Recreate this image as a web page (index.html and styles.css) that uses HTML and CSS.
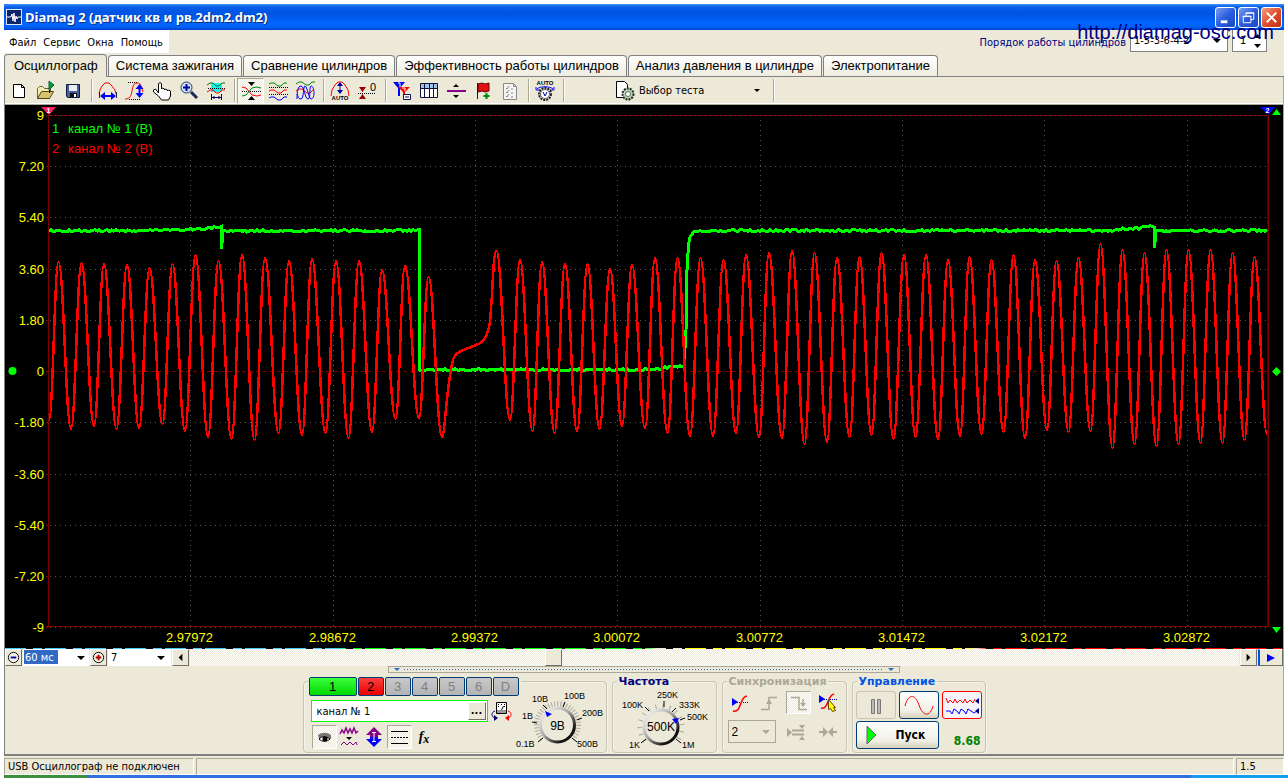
FILE: index.html
```html
<!DOCTYPE html>
<html lang="ru">
<head>
<meta charset="utf-8">
<title>Diamag 2</title>
<link rel="stylesheet" href="styles.css">
</head>
<body>
<div class="window">
  <header class="titlebar">
    <svg class="app-icon" viewBox="0 0 16 16"><rect width="16" height="16" fill="#dfe8ff"/><rect x="1" y="1" width="14" height="14" fill="#0a246a"/><path d="M1 8h4l1-3 1 7 1-8 1 9 1-6 1 3 1-2h3" fill="none" stroke="#fff"/></svg>
    <h1 class="title">Diamag 2 (датчик кв и рв.2dm2.dm2)</h1>
    <button class="win-btn" aria-label="Свернуть"><svg viewBox="0 0 20 20"><path d="M5 14.500h7" stroke="#fff" stroke-width="3"/></svg></button>
    <button class="win-btn" aria-label="Восстановить"><svg viewBox="0 0 20 20"><path d="M7.500 8V5h8v7h-3M7 5.500h9M4.500 8.500h8v7h-8zM4 9h9" fill="none" stroke="#fff"/></svg></button>
    <button class="win-btn close" aria-label="Закрыть"><svg viewBox="0 0 20 20"><path d="M5 5l10 10M15 5L5 15" stroke="#fff" stroke-width="2"/></svg></button>
  </header>
  <a class="watermark" href="#">http://diamag-osc.com</a>

  <div class="menu-row">
    <nav class="menu"><a href="#">Файл</a><a href="#">Сервис</a><a href="#">Окна</a><a href="#">Помощь</a></nav>
    <div class="order">
      <label for="order">Порядок работы цилиндров</label>
      <span class="combo order-combo"><select id="order"><option>1-5-3-6-4-2</option></select></span>
      <span class="spin"><input id="cyl" aria-label="Цилиндр" value="1"><svg viewBox="0 0 9 14"><path d="M1 4h7L4.500 0zM1 10h7l-3.500 4z"/></svg></span>
    </div>
  </div>

  <div class="tabs" role="tablist">
    <button role="tab" class="tab active" aria-selected="true">Осциллограф</button>
    <button role="tab" class="tab">Система зажигания</button>
    <button role="tab" class="tab">Сравнение цилиндров</button>
    <button role="tab" class="tab">Эффективность работы цилиндров</button>
    <button role="tab" class="tab">Анализ давления в цилиндре</button>
    <button role="tab" class="tab">Электропитание</button>
  </div>

  <main class="page">
    <div class="toolbar">
      <button class="tool" aria-label="Новый"><svg viewBox="0 0 24 24"><path d="M6.500 5.500h8l3 3v10h-11zM14.500 5.500v3h3" fill="#fff" stroke="#000"/></svg></button>
      <button class="tool" aria-label="Открыть"><svg viewBox="0 0 24 24"><path d="M3.500 19.500v-10l2-2h3l2 2h6v4" fill="#f5ecb0" stroke="#6b6334"/><path d="M3.500 19.500l4-7h12l-4 7z" fill="#d8c46c" stroke="#4b431c"/><path d="M15 2l5 4-5 5z" fill="#0a9a2a" stroke="#064"/><path d="M15.500 11v3" stroke="#000"/></svg></button>
      <button class="tool" aria-label="Сохранить"><svg viewBox="0 0 24 24"><path d="M5.500 5.500h13v13h-12l-1-1z" fill="#4a5c9a" stroke="#111a40"/><path d="M8 6h8v6H8z" fill="#e8eef4"/><path d="M9 14h7v4H9z" fill="#111"/><path d="M13 15h2v3h-2z" fill="#fff"/></svg></button>
      <i class="sep"></i>
      <button class="tool" aria-label="Период"><svg viewBox="0 0 24 24"><path d="M3 15l1-4 2-4 3-3h4l3 3 3 4 1 4" fill="none" stroke="red"/><path d="M3.500 13v6M20.500 13v6" stroke="#223"/><path d="M6 17h12" stroke="#00f" stroke-width="2"/><path d="M4 17l5-4v8zM20 17l-5-4v8z" fill="#00f"/></svg></button>
      <button class="tool" aria-label="Амплитуда"><svg viewBox="0 0 24 24"><path d="M5 3.500h9M6 20.500h12" stroke="#000" stroke-dasharray="1 1"/><path d="M2 20c5 0 6-3 7-8 1-6 2-8 5-8 4 0 4 3 6 9" fill="none" stroke="red"/><path d="M16.500 7v10" stroke="#00f" stroke-width="2"/><path d="M16.500 5l-4 5h8zM16.500 19l-4-5h8z" fill="#00f"/></svg></button>
      <button class="tool" aria-label="Рука"><svg viewBox="0 0 24 24"><path d="M8.500 14V4.500l1.500-1 1.500 1V10l1-1 2 1v1l1-1 2 1v1l1-1 2 1v5l-2 4h-7l-3-4-5-4v-2l2-1z" fill="#fff" stroke="#000"/></svg></button>
      <button class="tool" aria-label="Лупа"><svg viewBox="0 0 24 24"><path d="M14 13l6 6" stroke="#1b2a52" stroke-width="3"/><circle cx="9.500" cy="8.500" r="5.500" fill="#c8e4f4" stroke="#335"/><path d="M6 8.500h7M9.500 5v7" stroke="#00a" stroke-width="2"/></svg></button>
      <button class="tool" aria-label="Участок"><svg viewBox="0 0 24 24"><path d="M7 4h11v9H7z" fill="#18f0f4"/><path d="M3 6l3-2h3l3 3h3l3-3h3" fill="none" stroke="#070"/><path d="M4 9.500h17" stroke="#000" stroke-dasharray="1 1"/><path d="M3 13l3-2h3l3 3h3l3-3h3" fill="none" stroke="red"/><path d="M8 18.500h9M7.500 15v6M17.500 15v6M10 17v3M15 17v3" stroke="#006"/></svg></button>
      <i class="sep"></i>
      <button class="tool pressed" aria-label="Совместить"><svg viewBox="0 0 24 24"><path d="M9 3h7l-3.500 4zM9 21h7l-3.500-4z"/><path d="M3 12.500h19" stroke="#000" stroke-dasharray="1 1"/><path d="M3 8l4 1 6 7 5 1 4-1" fill="none" stroke="red"/><path d="M3 17l4-1 6-7 5-1 4 1" fill="none" stroke="#080"/></svg></button>
      <button class="tool" aria-label="Разнести"><svg viewBox="0 0 24 24"><path d="M3 5l2-1h3l4 3h3l3-3h3" fill="none" stroke="#080"/><path d="M3 12l2-1h3l4 3h3l3-3h3" fill="none" stroke="red"/><path d="M3 19l2-1h3l4 3h3l3-3h3" fill="none" stroke="#00f"/><path d="M3 8.500h19M3 15.500h19" stroke="#000" stroke-dasharray="1 1"/></svg></button>
      <button class="tool" aria-label="Наложить"><svg viewBox="0 0 24 24"><path d="M3 5l3-2h3l4 3h3l3-3h3" fill="none" stroke="#080"/><path d="M3 12l3-2h3l5 4h3l4-4" fill="none" stroke="red"/><path d="M4 20c0-8 1-13 4-13s4 13 7 13 1-13 3-13 3 4 3 7-1 6-3 6-4-13-6-13-1 13-4 13-3-3-4-5" fill="none" stroke="#00f"/></svg></button>
      <i class="sep"></i>
      <button class="tool" aria-label="Авто амплитуда"><svg viewBox="0 0 24 24"><path d="M3 17l1-6 3-5 3-3h4l3 3 3 5 1 6" fill="none" stroke="red"/><path d="M12 5v9" stroke="#00a"/><path d="M12 3l-3 4h6zM12 15l-3-4h6z" fill="#00a"/><text x="12" y="21" class="auto">AUTO</text></svg></button>
      <button class="tool" aria-label="Ноль"><svg viewBox="0 0 24 24"><path d="M4 8h7l-3.500 5zM4 20h7l-3.500-5z" fill="#900"/><path d="M3 14.500h18" stroke="#000" stroke-dasharray="1 1"/><text x="15" y="12" class="zero">0</text></svg></button>
      <i class="sep"></i>
      <button class="tool" aria-label="Маркеры"><svg viewBox="0 0 24 24"><path d="M3 3h12L10 9v8H8V9z" fill="#00f"/><path d="M8 8h12l-5 5v6h-2v-6z" fill="red"/><path d="M8 4h2v4" fill="none" stroke="#fff"/><path d="M12 9h3v3" fill="none" stroke="#fff"/><path d="M13.500 15.500h7v5h-7z" fill="#fff" stroke="#115"/><path d="M15 18h4" stroke="#115"/></svg></button>
      <button class="tool" aria-label="Таблица"><svg viewBox="0 0 24 24"><path d="M3.500 4.500h17v14h-17z" fill="#fff" stroke="#113"/><path d="M4 5h16v4H4z" fill="#9cc4ec"/><path d="M3 9.500h18M7.500 5v13M12.500 5v13M16.500 5v13" stroke="#113"/></svg></button>
      <button class="tool" aria-label="Линия"><svg viewBox="0 0 24 24"><path d="M3 12h19" stroke="#808" stroke-width="2"/><path d="M9 8h6l-3-3zM9 16h6l-3 3z"/></svg></button>
      <button class="tool" aria-label="Флаг"><svg viewBox="0 0 24 24"><path d="M6.500 4v16" stroke="#400"/><path d="M7 5l4-1 3 1 4-1v8l-4 1-3-1-4 1z" fill="#e01010" stroke="#600"/><path d="M15.500 14v6M12.500 17h6" stroke="#080" stroke-width="2"/></svg></button>
      <button class="tool" aria-label="Отчёт"><svg viewBox="0 0 24 24"><path d="M5.500 4.500h10l3 3v13h-13zM15.500 4.500v3h3" fill="#f4f4f0" stroke="#888"/><path d="M8 9l1 1 2-3M8 13l1 1 2-3M8 17l1 1 2-3M13 10h2M13 14h2M13 18h2" fill="none" stroke="#888"/></svg></button>
      <i class="sep"></i>
      <button class="tool" aria-label="Авто вольт"><svg viewBox="0 0 24 24"><text x="12" y="6" class="auto">AUTO</text><path d="M4 10c3-3 13-3 16 0M3 8v3h4M21 8v3h-4" fill="none" stroke="#00f"/><circle cx="12" cy="15" r="6" fill="#ddd" stroke="#222" stroke-width="2" stroke-dasharray="2 1"/><circle cx="12" cy="15" r="4.500" fill="#fff" stroke="#666"/><path d="M10 13l2 4 2-4" fill="none" stroke="#00a"/></svg></button>
      <i class="sep"></i>
      <button class="test-select"><svg viewBox="0 0 24 24"><path d="M4.500 2.500h8l3 3v13h-11z" fill="#fff" stroke="#000"/><circle cx="16" cy="15" r="5.500" fill="#b9d0b9" stroke="#1d2d1d" stroke-width="2" stroke-dasharray="2 1"/><circle cx="16" cy="15" r="2.500" fill="#fff" stroke="#5b755b"/></svg><span>Выбор теста</span><i class="caret"></i></button>
      <i class="sep"></i>
    </div>

    <svg class="plot" id="plot" viewBox="5 105 1278 543" role="img" aria-label="Осциллограмма"></svg>
    <div class="strip"></div>

    <div class="scroll-row">
      <button class="mini" aria-label="Уменьшить"><svg viewBox="0 0 16 16"><circle cx="8" cy="8" r="5.500" fill="#f4f0e4" stroke="#000"/><path d="M5 8h6" stroke="#00a" stroke-width="2"/></svg></button>
      <span class="combo time-combo"><select aria-label="Время"><option>60 мс</option></select></span>
      <button class="mini" aria-label="Увеличить"><svg viewBox="0 0 16 16"><circle cx="8" cy="8" r="5.500" fill="#f4f0e4" stroke="#000"/><path d="M5 8h6M8 5v6" stroke="#a00" stroke-width="2"/></svg></button>
      <span class="combo seven-combo"><select aria-label="Масштаб"><option>7</option></select></span>
      <button class="mini" aria-label="Назад"><svg viewBox="0 0 16 16"><path d="M10 4v8L6 8z"/></svg></button>
      <input class="scroll" type="range" aria-label="Прокрутка" min="0" max="1000" value="344">
      <button class="mini" aria-label="Вперёд"><svg viewBox="0 0 16 16"><path d="M6 4v8l4-4z"/></svg></button>
      <button class="mini play" aria-label="Воспроизвести"><svg viewBox="0 0 16 16"><path d="M4 4v8l8-4z" fill="#00f"/></svg></button>
    </div>
    <div class="splitter"><i></i><b></b><i></i></div>

    <div class="panels">
      <section class="group channel">
        <div class="controls">
          <div class="channels"><button class="ch one">1</button><button class="ch two">2</button><button class="ch">3</button><button class="ch">4</button><button class="ch">5</button><button class="ch">6</button><button class="ch">D</button></div>
          <div class="name-row">
            <span class="name-box"><input aria-label="Имя канала" value="канал № 1"><button>...</button></span>
            <button class="tool" aria-label="Поменять"><svg viewBox="0 0 24 24"><path d="M7.500 3.500h10v11h-10z" fill="#fff" stroke="#000"/><path d="M9 5.500h1M12 5.500h1M15 5.500h1M9 7.500h1M15 7.500h1M12.500 11l2-4" fill="none" stroke="#000"/><path d="M8 11h9v3H8z" fill="#999"/><path d="M6 12c-4 1-4 6 0 7" fill="none" stroke="#006"/><path d="M5 16v6l4-3z" fill="#006"/><path d="M19 12c4 1 4 6 0 7" fill="none" stroke="red"/><path d="M20 16v6l-4-3z" fill="red"/></svg></button>
          </div>
          <div class="view-row">
            <button class="tool pressed" aria-label="Видимость"><svg viewBox="0 0 24 24"><path d="M6 10c4-3 9-3 13 0v4H7z" fill="#777"/><path d="M7 14c3-3 7-3 11 0-3 3-8 3-11 0z" fill="#fff" stroke="#000"/><circle cx="13" cy="14" r="2.500"/></svg></button>
            <button class="tool" aria-label="Фильтр"><svg viewBox="0 0 24 24"><path d="M3 9l2-4 2 3 2-5 2 5 2-4 2 4 2-5 2 5 2-2" fill="none" stroke="#808" stroke-width="1.500"/><path d="M9 12h6l-3 3z"/><path d="M4 20l3-3 3 3 3-3 3 3 3-3 1 3" fill="none" stroke="#808"/></svg></button>
            <button class="tool" aria-label="Сдвиг"><svg viewBox="0 0 24 24"><path d="M12 2l8 8h-4v2H8v-2H4z" fill="#808"/><path d="M12 22l8-8h-4v-2H8v2H4z" fill="#00f"/><path d="M12 7v10M10 7.500h4M10 16.500h4" stroke="#fff"/></svg></button>
            <button class="tool pressed" aria-label="Линии"><svg viewBox="0 0 24 24"><path d="M4 6.500h17M4 18.500h17" stroke="#000"/><path d="M4 12.500h17" stroke="#000" stroke-dasharray="2 1"/></svg></button>
            <button class="tool fx" aria-label="Функция">f<small>x</small></button>
          </div>
        </div>
        <svg class="dial" viewBox="512 690 94 62" role="img" aria-label="9В">
          <defs><linearGradient id="rim" x1="0" y1="0" x2="1" y2="1"><stop offset="0" stop-color="#fff"/><stop offset=".45" stop-color="#aaa"/><stop offset=".8" stop-color="#111"/></linearGradient></defs>
          <path d="M542 740A21 21 0 1 1 573 740" fill="none" stroke="#aca899" stroke-width="5" stroke-dasharray="1 2"/>
          <circle cx="557.500" cy="726" r="17" fill="#ece9d8" stroke="url(#rim)" stroke-width="3"/>
          <path d="M532 723l5 1M543 706l4 4M565 703l-2 5M582 719l-5 2M577 743l-5-4M538 743l5-4" stroke="#000"/>
          <path d="M545 712l7 3-5 3z" fill="#00f"/>
          <g class="scale"><text x="516" y="748">0.1В</text><text x="522" y="720">1В</text><text x="532" y="703">10В</text><text x="564" y="700">100В</text><text x="582" y="717">200В</text><text x="577" y="748">500В</text></g>
          <text x="557.500" y="731" class="value">9В</text>
        </svg>
      </section>

      <section class="group freq">
        <h2>Частота</h2>
        <svg class="dial" viewBox="616 690 94 62" role="img" aria-label="500K">
          <path d="M645 741A21 21 0 1 1 677 741" fill="none" stroke="#aca899" stroke-width="5" stroke-dasharray="1 6"/>
          <circle cx="661" cy="727" r="17" fill="#ece9d8" stroke="url(#rim)" stroke-width="3"/>
          <path d="M645 707l4 4M664 701v6M676 708l-4 4M685 718l-5 2M681 743l-5-4M641 743l5-4" stroke="#000"/>
          <path d="M672 719l7-1-3 6z" fill="#00f"/>
          <g class="scale"><text x="622" y="708">100K</text><text x="657" y="698">250K</text><text x="679" y="708">333K</text><text x="687" y="720">500K</text><text x="682" y="748">1M</text><text x="629" y="748">1K</text></g>
          <text x="661" y="731" class="value">500K</text>
        </svg>
      </section>

      <section class="group sync">
        <h2>Синхронизация</h2>
        <div class="sync-row">
          <button class="tool" aria-label="Уровень"><svg viewBox="0 0 24 24"><path d="M4 7l6 4-6 4z" fill="#00f"/><path d="M9 11.500h12" stroke="#00a" stroke-dasharray="1 1"/><path d="M5 20c9 2 6-14 14-15" fill="none" stroke="red" stroke-width="1.500"/></svg></button>
          <button class="tool" disabled aria-label="Фронт"><svg viewBox="0 0 24 24"><path d="M4 18.500h8v-12h8" fill="none" stroke="#aca899" stroke-width="1.500"/><path d="M12 8l-3 5h6z" fill="#aca899"/></svg></button>
          <button class="tool pressed" disabled aria-label="Спад"><svg viewBox="0 0 24 24"><path d="M4 6.500h8v12h8M16 8v6" fill="none" stroke="#aca899" stroke-width="1.500"/><path d="M16 16l-3-4h6z" fill="#aca899"/></svg></button>
          <button class="tool" aria-label="Курсор"><svg viewBox="0 0 24 24"><path d="M3 4l6 4-6 4z" fill="#00f"/><path d="M8 8.500h13" stroke="#00a" stroke-dasharray="1 1"/><path d="M5 17c8 2 6-13 13-14" fill="none" stroke="red" stroke-width="1.500"/><path d="M12.500 8.500v10l2-1 2 3 3-1-2-3h2z" fill="#ff0" stroke="#640"/></svg></button>
        </div>
        <div class="sync-row">
          <span class="combo sync-combo"><select disabled aria-label="Канал"><option>2</option></select></span>
          <button class="tool" disabled aria-label="Сжать"><svg viewBox="0 0 24 24"><path d="M3 8v9l5-4.500zM15 5h6l-3 4zM15 20h6l-3-4z" fill="#aca899"/><path d="M8 10.500h12M8 14.500h12" stroke="#aca899" stroke-width="2"/></svg></button>
          <button class="tool" disabled aria-label="Центр"><svg viewBox="0 0 24 24"><path d="M3 12h6M15 12h6" stroke="#aca899" stroke-width="2"/><path d="M7 7v10l5-5zM17 7v10l-5-5z" fill="#aca899"/></svg></button>
        </div>
      </section>

      <section class="group run">
        <h2>Управление</h2>
        <div class="run-grid">
          <button class="big off" aria-label="Пауза"><svg viewBox="0 0 38 26"><path d="M14.500 7.500h3v14h-3zM20.500 7.500h3v14h-3z" fill="#bbb" stroke="#777"/></svg></button>
          <button class="big" aria-label="Синус"><svg viewBox="0 0 38 26"><path d="M5 14C8 2 15 1 19 13s11 12 14 1" fill="none" stroke="red"/></svg></button>
          <button class="big red" aria-label="Поток"><svg viewBox="0 0 38 26"><path d="M3 6l2 5 2-3 3 3 2-4 2 4 3-3 3 3 2-4 2 4 3-3 3 3 2-4" fill="none" stroke="red"/><path d="M3 19h4l2 3 2-5 3 2 2 3 2-5 3 2 2 3 2-5 3 2 3 2 3-2" fill="none" stroke="#00f"/><path d="M36 6v6l-4-3zM36 16v6l-4-3z" fill="#009"/></svg></button>
          <button class="big start"><svg viewBox="0 0 12 20"><path d="M1 1l9 9-9 9z" fill="#0f0" stroke="#666"/></svg><span>Пуск</span></button>
          <output>8.68</output>
        </div>
      </section>
    </div>
  </main>

  <footer class="status"><span class="cell first">USB Осциллограф не подключен</span><span class="cell"></span><span class="cell last">1.5</span></footer>
</div>
<div class="taskbar"><i class="startbtn"></i><i class="tray"></i></div>
<script src="plot.js"></script>
</body>
</html>
```
FILE: styles.css
```css
* { box-sizing: border-box; }
body { margin: 0; background: #fff; color: #000; font: 11px/13px "DejaVu Sans Condensed", "Noto Sans", sans-serif; overflow: hidden; }
button, select, input { font: inherit; color: inherit; padding: 0; margin: 0; border: 0; border-radius: 0; background: none; outline: 0; }
select { appearance: none; display: block; width: 100%; height: 100%; padding-left: 3px; opacity: 1; }
svg { display: block; }
a { color: inherit; text-decoration: none; }
h1, h2 { margin: 0; }
.window { position: relative; margin: 4px 4px 0; background: #ece9d8; }

.titlebar { display: flex; align-items: center; gap: 2px; height: 26px; padding: 0 2px; background: linear-gradient(#3a93ff 0, #0a5ce8 3px, #0054e3 10px, #0066ff 20px, #0060f8 23px, #0040c8 26px); color: #fff; }
.app-icon { width: 16px; height: 16px; }
.title { flex: 1; padding-left: 1px; font: bold 13px/18px "Noto Sans", sans-serif; text-shadow: 1px 1px #0a3080; }
.win-btn { width: 21px; height: 21px; border: 1px solid #fff; border-radius: 3px; background: linear-gradient(135deg, #7ba0f0, #2a5ce0 50%, #1c48c0); }
.win-btn.close { background: linear-gradient(135deg, #f0a080, #e05030 50%, #c03010); }
.watermark { position: absolute; top: 17px; right: 10px; z-index: 2; color: #000080; font: 20px/22px "Liberation Sans", sans-serif; }

.menu-row { display: flex; justify-content: space-between; align-items: flex-start; height: 24px; }
.menu { display: flex; gap: 7px; height: 23px; padding: 6px 6px 0 5px; background: #fff; }
.order { display: flex; gap: 4px; padding-right: 17px; color: #000080; }
.order label { padding-top: 6px; }
.combo { position: relative; display: block; background: #fff; color: #000; }
.combo::after, .caret { content: ""; border: 4px solid transparent; border-top-color: #000; border-bottom: 0; }
.combo::after { position: absolute; right: 6px; top: 50%; margin-top: -2px; pointer-events: none; }
.order-combo { width: 98px; height: 22px; border: 1px solid #808080; border-top: 0; }
.spin { display: flex; align-items: center; width: 35px; height: 22px; border: 1px solid #808080; border-top: 0; background: #fff; color: #000; }
.spin input { width: 20px; padding-left: 7px; }
.spin svg { width: 9px; height: 14px; }

.tabs { display: flex; align-items: flex-end; gap: 1px; height: 23px; border-bottom: 1px solid #808080; font: 13px/18px "Liberation Sans", sans-serif; }
.tab { height: 21px; padding: 0 7px; white-space: nowrap; border: 1px solid #808080; border-bottom: 0; border-radius: 4px 4px 0 0; background: linear-gradient(#fff, #eeecdf); }
.tab.active { height: 23px; margin-bottom: -1px; padding: 0 8px 0 9px; background: #ece9d8; }

.page { border: 1px solid #808080; border-top: 0; border-right-color: #aca899; }
.toolbar { display: flex; align-items: center; height: 28px; border-bottom: 1px solid #aca899; box-shadow: inset 0 -1px #fff; }
.tool { width: 27px; height: 26px; flex: none; display: flex; align-items: center; justify-content: center; }
.tool svg { width: 24px; height: 24px; flex: none; }
.pressed { border: 1px solid #aca899; border-right-color: #fff; border-bottom-color: #fff; background: repeating-conic-gradient(#fff 0 25%, #ece9d8 0 50%) 0 0 / 2px 2px; }
.sep { width: 8px; height: 23px; border-left: 5px solid transparent; flex: none; background: linear-gradient(90deg, #aca899 1px, #fff 1px 2px, transparent 2px) no-repeat; }
.auto { font: bold 6px "Liberation Sans", sans-serif; text-anchor: middle; }
.zero { font: 11px "Liberation Sans", sans-serif; }
.test-select { display: flex; align-items: center; gap: 3px; width: 202px; height: 26px; padding: 0 8px 0 46px; }
.test-select svg { width: 24px; height: 24px; }
.test-select span { flex: 1; text-align: left; }
.caret { border-width: 3px 3px 0; }

.plot { width: 100%; height: auto; background: #000; }
.plot text { font: 13px "Liberation Sans", sans-serif; fill: #ff0; }
.plot .end { text-anchor: end; }
.plot .mid { text-anchor: middle; }
.plot .g { fill: #0f0; }
.plot .r { fill: #f00; }
.plot .tiny { font: bold 7px "Liberation Sans", sans-serif; fill: #fff; text-anchor: middle; }
.strip { height: 1px; background: repeating-linear-gradient(90deg, transparent 0 21px, #000 21px 28px, transparent 28px 37px, #000 37px 40px), linear-gradient(90deg, #4cf 0 26%, #0f0 27% 50%, #ece9d8 51% 53%, #ff0 53% 75%, #ece9d8 76%, #f00 77%); }

.scroll-row { display: flex; gap: 1px; height: 17px; background: #ece9d8; }
.mini { width: 17px; height: 17px; flex: none; border: 1px solid #fff; border-right-color: #716f64; border-bottom-color: #716f64; background: #ece9d8; display: flex; align-items: center; justify-content: center; }
.mini svg { width: 15px; height: 15px; }
.mini.play { width: 25px; border-left: 2px solid #0054e3; }
.mini.play svg { width: 16px; height: 16px; }
.time-combo { width: 66px; padding: 1px; }
.time-combo::after { right: 4px; }
.time-combo select { width: 34px; height: 14px; padding-left: 1px; background: #316ac5; color: #fff; }
.seven-combo { width: 63px; }
.scroll { appearance: none; flex: 1; min-width: 0; height: 17px; background: repeating-conic-gradient(#fff 0 25%, #ece9d8 0 50%) 0 0 / 2px 2px; }
.scroll::-webkit-slider-thumb { appearance: none; width: 17px; height: 17px; border: 1px solid #fff; border-right-color: #716f64; border-bottom-color: #716f64; background: #ece9d8; }

.splitter { display: flex; align-items: center; justify-content: space-between; width: 40%; height: 7px; margin: 0 auto; padding: 0 5px; border: 1px solid #aca899; }
.splitter i { border: 3px solid transparent; border-top-color: #316ac5; border-bottom: 0; }
.splitter b { flex: 1; height: 1px; margin: 0 4px; background: repeating-linear-gradient(90deg, #316ac5 0 1px, transparent 1px 3px); }

.panels { display: flex; justify-content: center; align-items: stretch; gap: 5px; padding: 8px 0 1px; border-bottom: 1px solid #808080; }
.group { height: 72px; border: 1px solid #c8c4b4; border-radius: 4px; box-shadow: inset 1px 1px #f6f4ea, 1px 1px #f6f4ea; }
.group h2 { width: max-content; height: 12px; margin: -6px 0 0 4px; padding: 0 2px; background: #ece9d8; color: #000080; font: bold 11px/12px "DejaVu Sans", sans-serif; }
.channel { display: flex; width: 304px; padding-left: 5px; }
.controls { width: 203px; }
.channels { display: flex; gap: 1px; width: 212px; margin-top: -5px; background: #ece9d8; }
.ch { width: 26px; height: 19px; border: 1px solid #003c74; border-radius: 2px; background: linear-gradient(#c8c8c8, #b4b4b4); color: #808080; font: 13px/16px "Liberation Sans", sans-serif; }
.ch.one { width: 48px; background: linear-gradient(#3cff3c, #00d800); color: #000; }
.ch.two { background: linear-gradient(#ff4040, #e80000); color: #000; }
.name-row { display: flex; align-items: center; height: 28px; padding: 2px 0 0 2px; }
.name-box { display: flex; flex: none; width: 177px; height: 22px; border: 1px solid #0f0; background: #fff; }
.name-box input { flex: 1; min-width: 0; padding-left: 5px; }
.name-box button { width: 18px; height: 18px; margin: 1px; border: 1px solid #fff; border-right-color: #716f64; border-bottom-color: #716f64; background: #ece9d8; font-weight: bold; line-height: 8px; }
.view-row { display: flex; padding: 1px 0 0 3px; }
.view-row .tool { width: 25px; height: 24px; }
.view-row .tool svg { width: 24px; height: 24px; }
.fx { font: italic bold 14px/20px "Liberation Serif", serif; }
.fx small { font-size: 12px; padding-top: 4px; }
.dial { width: 94px; height: 62px; margin-top: 7px; }
.scale text { font: 9px "Liberation Sans", sans-serif; }
.value { font: 12px "Liberation Sans", sans-serif; text-anchor: middle; }
.freq { width: 105px; }
.freq .dial { margin: 2px 0 0 3px; }
.sync { width: 125px; }
.group.sync h2 { color: #aca899; }
.sync-row { display: flex; align-items: center; justify-content: space-between; height: 29px; padding: 0 5px; }
.sync-row .tool { width: 25px; height: 23px; }
.sync-combo { width: 48px; height: 23px; border: 1px solid #aca899; background: #ece9d8; font: 12px "Liberation Sans", sans-serif; }
.sync-combo::after { border-top-color: #aca899; right: 5px; }
.run { width: 134px; }
.group.run h2 { color: #0054e3; }
.run-grid { display: grid; grid-template-columns: 40px 40px 40px; gap: 2px 3px; padding: 3px; }
.big { display: flex; align-items: center; justify-content: center; height: 28px; border: 1px solid #003c74; border-radius: 3px; background: linear-gradient(#fff, #f2f1e8 70%, #d8d2bc); }
.big svg { width: 38px; height: 26px; }
.big.off { border-color: #c8c4b4; background: #ece9d8; }
.big.red { border-color: #f00; background: #f4f4fa; }
.big.start { grid-column: span 2; justify-content: flex-start; gap: 18px; padding-left: 9px; font: bold 12px/14px "DejaVu Sans Condensed", sans-serif; }
.big.start svg { width: 12px; height: 20px; }
.run output { align-self: end; justify-self: end; padding: 0 1px 1px 0; color: #008000; font: bold 12px/14px "DejaVu Sans Condensed", sans-serif; }

.status { display: grid; grid-template-columns: 190px 1fr 48px; gap: 2px; padding-top: 2px; }
.cell { height: 17px; padding: 1px 0 0 3px; border: 1px solid #aca899; border-right-color: #fff; border-bottom-color: #fff; }
.taskbar { display: flex; justify-content: space-between; height: 5px; margin-left: 4px; background: #2f6fe0; }
.startbtn { width: 84px; background: #3c8f3c; border-radius: 0 4px 0 0; }
.tray { width: 97px; background: #12a0ec; }
```
FILE: plot.js
```js
(function () {
  var plot = document.getElementById('plot');
  var out = [];
  function line(x1, y1, x2, y2, stroke, dash) {
    out.push('<path d="M' + x1 + ' ' + y1 + 'L' + x2 + ' ' + y2 + '" stroke="' + stroke + '"' + (dash ? ' stroke-dasharray="' + dash + '"' : '') + '/>');
  }
  function text(x, y, cls, s) {
    out.push('<text x="' + x + '" y="' + y + '" class="' + cls + '">' + s + '</text>');
  }

  // grid and axis labels
  var rows = [[115.5, '9'], [166.5, '7.20'], [217.5, '5.40'], [269.5, '3.60'], [320.5, '1.80'], [371.5, '0'], [422.5, '-1.80'], [474.5, '-3.60'], [525.5, '-5.40'], [576.5, '-7.20'], [627.5, '-9']];
  rows.forEach(function (r) {
    var edge = r[0] === 115.5 || r[0] === 627.5;
    if (edge) line(46, r[0] - (r[0] > 600 ? 1 : 0), 1269, r[0] - (r[0] > 600 ? 1 : 0), '#800000');
    if (r[0] === 371.5) line(46, r[0], 1267, r[0], '#800000', '4 3');
    else line(50, r[0], 1267, r[0], '#555', '1 4');
    line(46, r[0], 49, r[0], '#800000');
    text(44, r[0] + 4, 'end', r[1]);
  });
  [[190.5, '2.97972'], [333.5, '2.98672'], [475.5, '2.99372'], [617.5, '3.00072'], [760.5, '3.00772'], [902.5, '3.01472'], [1044.5, '3.02172'], [1187.5, '3.02872']].forEach(function (c) {
    line(c[0], 120, c[0], 630, '#555', '1 4');
    text(c[0] - 1, 642, 'mid', c[1]);
  });
  line(48.5, 115, 48.5, 627, '#800000');
  line(1268.5, 115, 1268.5, 627, '#800000');
  line(1267.5, 115, 1267.5, 627, '#0000c8');

  // channel 1, level signal with a little noise
  var g = [[49, 231], [170, 230.5], [205, 228.5], [220, 227], [221.5, 226], [221.5, 249], [223, 231], [419, 230.5], [419, 370], [655, 369.5], [665, 367.5], [684, 366.5], [686, 330], [687, 270], [688.5, 245], [690, 237], [694, 231.5], [700, 230.5], [1110, 230.5], [1125, 229], [1139, 228.5], [1141, 227], [1154.5, 226.5], [1154.5, 248], [1156, 231], [1267, 230.5]];
  var seed = 7, d = 'M49 231';
  function rnd() { seed = (seed * 1103515 + 12345) % 2147483648; return seed / 2147483648 - 0.5; }
  for (var i = 1; i < g.length; i++) {
    var a = g[i - 1], b = g[i], n = Math.max(1, Math.floor((b[0] - a[0]) / 2));
    for (var k = 1; k <= n; k++) {
      var flat = Math.abs(b[1] - a[1]) < 4;
      d += 'L' + (a[0] + (b[0] - a[0]) * k / n).toFixed(1) + ' ' + (a[1] + (b[1] - a[1]) * k / n + (flat ? rnd() * 2.2 : 0)).toFixed(1);
    }
  }
  out.push('<path d="' + d + '" fill="none" stroke="#0f0" stroke-width="3" shape-rendering="crispEdges"/>');

  // channel 2, turning points of the wave
  function wave(p) {
    var s = 'M' + p[0] + ' ' + p[1];
    for (var j = 2; j < p.length; j += 2) {
      var w = p[j] - p[j - 2];
      s += 'C' + (p[j - 2] + w * 0.4) + ' ' + p[j - 1] + ' ' + (p[j] - w * 0.4) + ' ' + p[j + 1] + ' ' + p[j] + ' ' + p[j + 1];
    }
    return s;
  }
  var first = [49, 420, 58.5, 262, 71, 429, 81.5, 263, 94, 426, 104, 264, 116.5, 429, 127, 265, 139, 428, 149.5, 268, 162.5, 424, 172.5, 264, 185, 431, 195.5, 255, 208, 437, 218.5, 261, 231.5, 439, 242, 255, 254.5, 440, 265, 258, 278.5, 433, 289, 261, 302, 435, 312, 259, 325.5, 433, 336, 261, 348.5, 438, 359, 261, 372, 432, 382, 270, 395.5, 419, 405, 266, 419, 418, 428.5, 277, 442, 437];
  var second = [496.5, 251, 510, 420, 520, 260, 532.5, 431, 542, 262, 554.5, 433, 565, 264, 577, 431, 587.5, 264.5, 599.5, 429, 610, 269, 622, 426, 632, 265, 645, 428, 655, 258, 667.5, 433, 677.5, 258, 690, 436, 700.5, 258, 713, 436, 723.5, 260, 736, 433, 746, 255, 759, 437, 769, 253, 782, 438, 792, 251, 804.5, 444, 814.5, 253, 827, 442, 837, 258, 849.5, 437, 859.5, 257, 871.5, 435, 881.5, 253, 893.5, 439, 904, 255, 915.5, 437, 926, 255, 938, 439, 948, 260, 960, 436, 969.5, 257, 981.5, 434, 991.5, 260, 1003.5, 432, 1013.5, 255, 1025, 438, 1035, 260, 1047, 430, 1056.5, 261, 1068.5, 432, 1078.5, 258, 1090.5, 431, 1100.5, 244, 1112.5, 448, 1122.5, 250, 1134.5, 444, 1144.5, 253, 1156.5, 446, 1166.5, 250, 1178.5, 444, 1188.5, 250, 1200.5, 443, 1210.5, 250, 1222.5, 443, 1232.5, 253, 1244.5, 440, 1254.5, 257, 1267, 434];
  var gap = 'C445 437 447 375 454 357C457 351 467 349 476 345C484 343 488 335 490 322C493 290 493 251 496.5 251';
  out.push('<path d="' + wave(first) + gap + wave(second).replace(/^M[\d.]+ [\d.]+/, '') + '" fill="none" stroke="red" stroke-width="2.5" shape-rendering="crispEdges"/>');

  // legend and cursors
  text(52, 133, 'g', '1'); text(68, 133, 'g', 'канал № 1 (В)');
  text(52, 153, 'r', '2'); text(68, 153, 'r', 'канал № 2 (В)');
  out.push('<path d="M41 107h15l-7 8z" fill="#ff2060"/><path d="M1260 107h15l-7 8z" fill="#00f"/>');
  text(48.5, 113, 'tiny', '1'); text(1267.5, 113, 'tiny', '2');
  out.push('<path d="M1272 115h9l-4.500-6zM1272 627h9l-4.500 6zM1276.500 367l4.500 4.500-4.500 4.500-4.500-4.500z" fill="#0f0"/><circle cx="12.500" cy="371" r="4" fill="#0f0"/>');
  plot.innerHTML = out.join('');
})();
```
